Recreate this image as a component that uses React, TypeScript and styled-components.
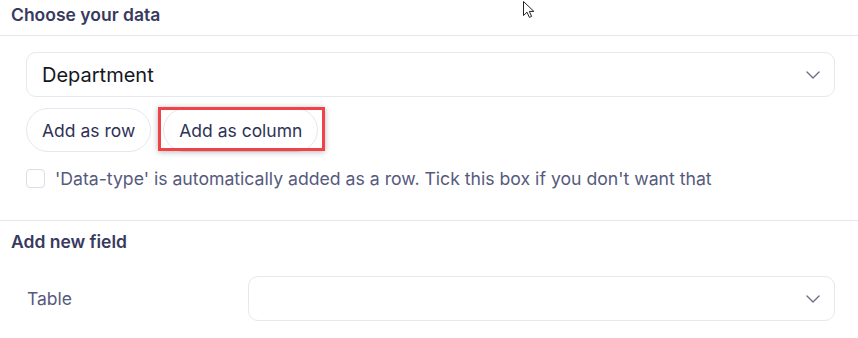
import React from "react";
import styled, { createGlobalStyle } from "styled-components";

const Global = createGlobalStyle`
  html, body { margin: 0; padding: 0; background: #fff; }
  body { font-family: Inter, "Noto Sans", sans-serif; -webkit-font-smoothing: antialiased; }
  * { box-sizing: border-box; }
`;

const Page = styled.div`
  position: relative;
  width: 858px;
  height: 338px;
  overflow: hidden;
  background: #fff;
`;

const SectionHeader = styled.div`
  padding: 4px 11px 0;
  height: 36px;
  font-size: 17.5px;
  font-weight: 600;
  color: #373a5e;
  line-height: 22px;
  border-bottom: 1px solid #e6e6ec;
`;

const Body = styled.div`
  padding: 16px 23px 0 26px;
  display: flex;
  flex-direction: column;
`;

const Select = styled.div<{ $width?: string }>`
  height: 45px;
  width: ${(p) => p.$width ?? "100%"};
  border: 1px solid #e7e7ef;
  border-radius: 10px;
  display: flex;
  align-items: center;
  justify-content: space-between;
  padding: 0 14px 0 15px;
  font-size: 20px;
  color: #16161e;
`;

const ButtonRow = styled.div`
  display: flex;
  gap: 12px;
  margin-top: 11px;
`;

const Pill = styled.button`
  position: relative;
  height: 44px;
  padding: 0 15px;
  border: 1px solid #e7e7ee;
  border-radius: 22px;
  background: #fff;
  font-family: inherit;
  font-size: 17.5px;
  color: #2f3256;
`;

const Highlight = styled.span`
  position: absolute;
  left: -6px;
  top: -2px;
  right: -8px;
  bottom: 0px;
  border: 3px solid #ef4349;
  box-shadow: 0 1px 6px rgba(0, 0, 0, 0.28);
  pointer-events: none;
`;

const CheckRow = styled.label`
  display: flex;
  align-items: center;
  gap: 10px;
  margin-top: 16px;
  height: 20px;
  font-size: 17.65px;
  color: #565a7d;
`;

const Box = styled.span`
  width: 19px;
  height: 19px;
  flex: none;
  border: 1px solid #dcdce6;
  border-radius: 4px;
  background: #fff;
`;

const Divider = styled.div`
  margin-top: 32px;
  border-top: 1px solid #e6e6ec;
`;

const SubHeader = styled.div`
  padding: 10px 11px 0;
  font-size: 17.5px;
  font-weight: 600;
  color: #373a5e;
  line-height: 22px;
`;

const FieldRow = styled.div`
  display: grid;
  grid-template-columns: 221px 1fr;
  align-items: center;
  padding: 23px 23px 0 27px;
`;

const Label = styled.div`
  font-size: 17.5px;
  color: #565a7d;
`;

const Cursor = styled.svg`
  position: absolute;
  left: 522px;
  top: 0px;
`;

const Chevron = () => (
  <svg width="14" height="8" viewBox="0 0 14 8" fill="none">
    <path d="M1 1l6 6 6-6" stroke="#6b6e8a" strokeWidth="1.4" strokeLinecap="round" strokeLinejoin="round" />
  </svg>
);

export default function App() {
  return (
    <Page>
      <Global />
      <SectionHeader>Choose your data</SectionHeader>
      <Body>
        <Select>
          <span>Department</span>
          <Chevron />
        </Select>
        <ButtonRow>
          <Pill>Add as row</Pill>
          <Pill>
            Add as column
            <Highlight />
          </Pill>
        </ButtonRow>
        <CheckRow>
          <Box />
          'Data-type' is automatically added as a row. Tick this box if you don't want that
        </CheckRow>
      </Body>
      <Divider />
      <SubHeader>Add new field</SubHeader>
      <FieldRow>
        <Label>Table</Label>
        <Select>
          <span />
          <Chevron />
        </Select>
      </FieldRow>
      <Cursor width="14" height="20" viewBox="0 0 14 20">
        <path d="M1.5 1.5v14l3.5-3.3 2.4 5.2 2.2-1-2.3-5h4.6z" fill="#fff" stroke="#222" strokeWidth="1" strokeLinejoin="round" />
      </Cursor>
    </Page>
  );
}
